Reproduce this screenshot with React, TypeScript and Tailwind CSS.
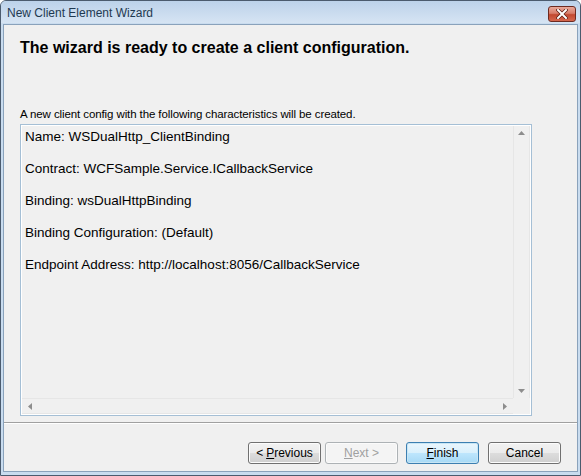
const lines = [
  "Name: WSDualHttp_ClientBinding",
  "Contract: WCFSample.Service.ICallbackService",
  "Binding: wsDualHttpBinding",
  "Binding Configuration: (Default)",
  "Endpoint Address: http://localhost:8056/CallbackService",
];

function WinButton({
  children,
  variant = "normal",
}: {
  children: React.ReactNode;
  variant?: "normal" | "default" | "disabled";
}) {
  const border =
    variant === "default"
      ? "border-[#3c7fb1] shadow-[inset_0_0_0_1px_#c8e6f5]"
      : variant === "disabled"
        ? "border-[#adb2b5] shadow-[inset_0_0_0_1px_#fbfbfb]"
        : "border-[#707070] shadow-[inset_0_0_0_1px_#fcfcfc]";
  const bg =
    variant === "default"
      ? "bg-[linear-gradient(#eaf6fd_0%,#d9f0fc_50%,#bee6fd_50%,#a7d9f5_100%)]"
      : variant === "disabled"
        ? "bg-[#f4f4f4]"
        : "bg-[linear-gradient(#f2f2f2_0%,#ebebeb_50%,#dddddd_50%,#cfcfcf_100%)]";
  return (
    <div
      className={`h-[22px] w-[73px] rounded-[3px] border flex items-center justify-center text-[12px] ${border} ${bg} ${
        variant === "disabled" ? "text-[#a0a0a0]" : "text-black"
      }`}
    >
      {children}
    </div>
  );
}

export default function App() {
  return (
    <div
      className="w-[581px] h-[476px] flex flex-col bg-[#c9dcef] border border-[#4b5b6e] rounded-t-[6px] overflow-hidden"
      style={{ fontFamily: '"Liberation Sans", Arial, sans-serif' }}
    >
      {/* title bar */}
      <div className="h-[22px] shrink-0 flex items-center justify-between pl-[6px] pr-[4px] bg-[linear-gradient(#bcd2ea,#d6e4f3)]">
        <span className="text-[12px] text-[#1e3951] pt-[2px]">New Client Element Wizard</span>
        <div className="w-[28px] h-[16px] mt-[4px] rounded-[3px] border border-[#6d2a20] bg-[linear-gradient(#e9a99a_0%,#d77c69_45%,#c2482f_55%,#d5674e_100%)] flex items-center justify-center">
          <svg width="12" height="10" viewBox="0 0 12 10">
            <path d="M2 1 L10 9 M10 1 L2 9" stroke="#5b1a10" strokeWidth="3.4" strokeLinecap="square" />
            <path d="M2 1 L10 9 M10 1 L2 9" stroke="#ffffff" strokeWidth="2" strokeLinecap="square" />
          </svg>
        </div>
      </div>

      {/* client area */}
      <div className="flex-1 mx-[2px] mb-[3px] mt-[1px] border border-[#8aa2bb] bg-[#f0f0f0] flex flex-col">
        <div className="px-[16px] pt-[13px] h-[82px]">
          <h1 className="text-[16px] font-bold text-black leading-[20px]">
            The wizard is ready to create a client configuration.
          </h1>
        </div>

        <div className="px-[16px]">
          <p className="text-[11.5px] leading-[14px] text-black tracking-[-0.1px]">
            A new client config with the following characteristics will be created.
          </p>
          <div className="mt-[3px] h-[292px] w-[512px] border border-[#a5bfd5] flex flex-col">
            <div className="flex-1 flex border border-white border-b-0 min-h-0">
              <div className="flex-1 pl-[3px] pt-[3px] text-[13.5px] text-black">
                {lines.map((l) => (
                  <div key={l} className="h-[32px] leading-[16px]">
                    {l}
                  </div>
                ))}
              </div>
              {/* vertical scrollbar */}
              <div className="w-[17px] border-x border-[#e6e6e6] bg-[#f0f0f0] flex flex-col items-center justify-between py-[5px]">
                <svg width="7" height="4" viewBox="0 0 7 4">
                  <path d="M3.5 0 L7 4 L0 4 Z" fill="#8d8d8d" />
                </svg>
                <svg width="7" height="4" viewBox="0 0 7 4">
                  <path d="M0 0 L7 0 L3.5 4 Z" fill="#8d8d8d" />
                </svg>
              </div>
            </div>
            {/* horizontal scrollbar */}
            <div className="h-[17px] flex border border-white border-t-0">
              <div className="flex-1 border-y border-[#e6e6e6] bg-[#f0f0f0] flex items-center justify-between px-[6px]">
                <svg width="4" height="7" viewBox="0 0 4 7">
                  <path d="M4 0 L4 7 L0 3.5 Z" fill="#8d8d8d" />
                </svg>
                <svg width="4" height="7" viewBox="0 0 4 7">
                  <path d="M0 0 L4 3.5 L0 7 Z" fill="#8d8d8d" />
                </svg>
              </div>
              <div className="w-[17px] bg-[#f0f0f0]" />
            </div>
          </div>
        </div>

        <div className="mt-[6px] border-t border-[#a0a0a0] shadow-[0_1px_0_#ffffff]" />

        <div className="flex justify-end items-center pr-[16px] pt-[19px]">
          <WinButton>
            &lt; <span className="underline ml-[3px]">P</span>revious
          </WinButton>
          <div className="w-[4px]" />
          <WinButton variant="disabled">
            <span className="underline">N</span>ext &gt;
          </WinButton>
          <div className="w-[8px]" />
          <WinButton variant="default">
            <span className="underline">F</span>inish
          </WinButton>
          <div className="w-[9px]" />
          <WinButton>Cancel</WinButton>
        </div>
      </div>
    </div>
  );
}
